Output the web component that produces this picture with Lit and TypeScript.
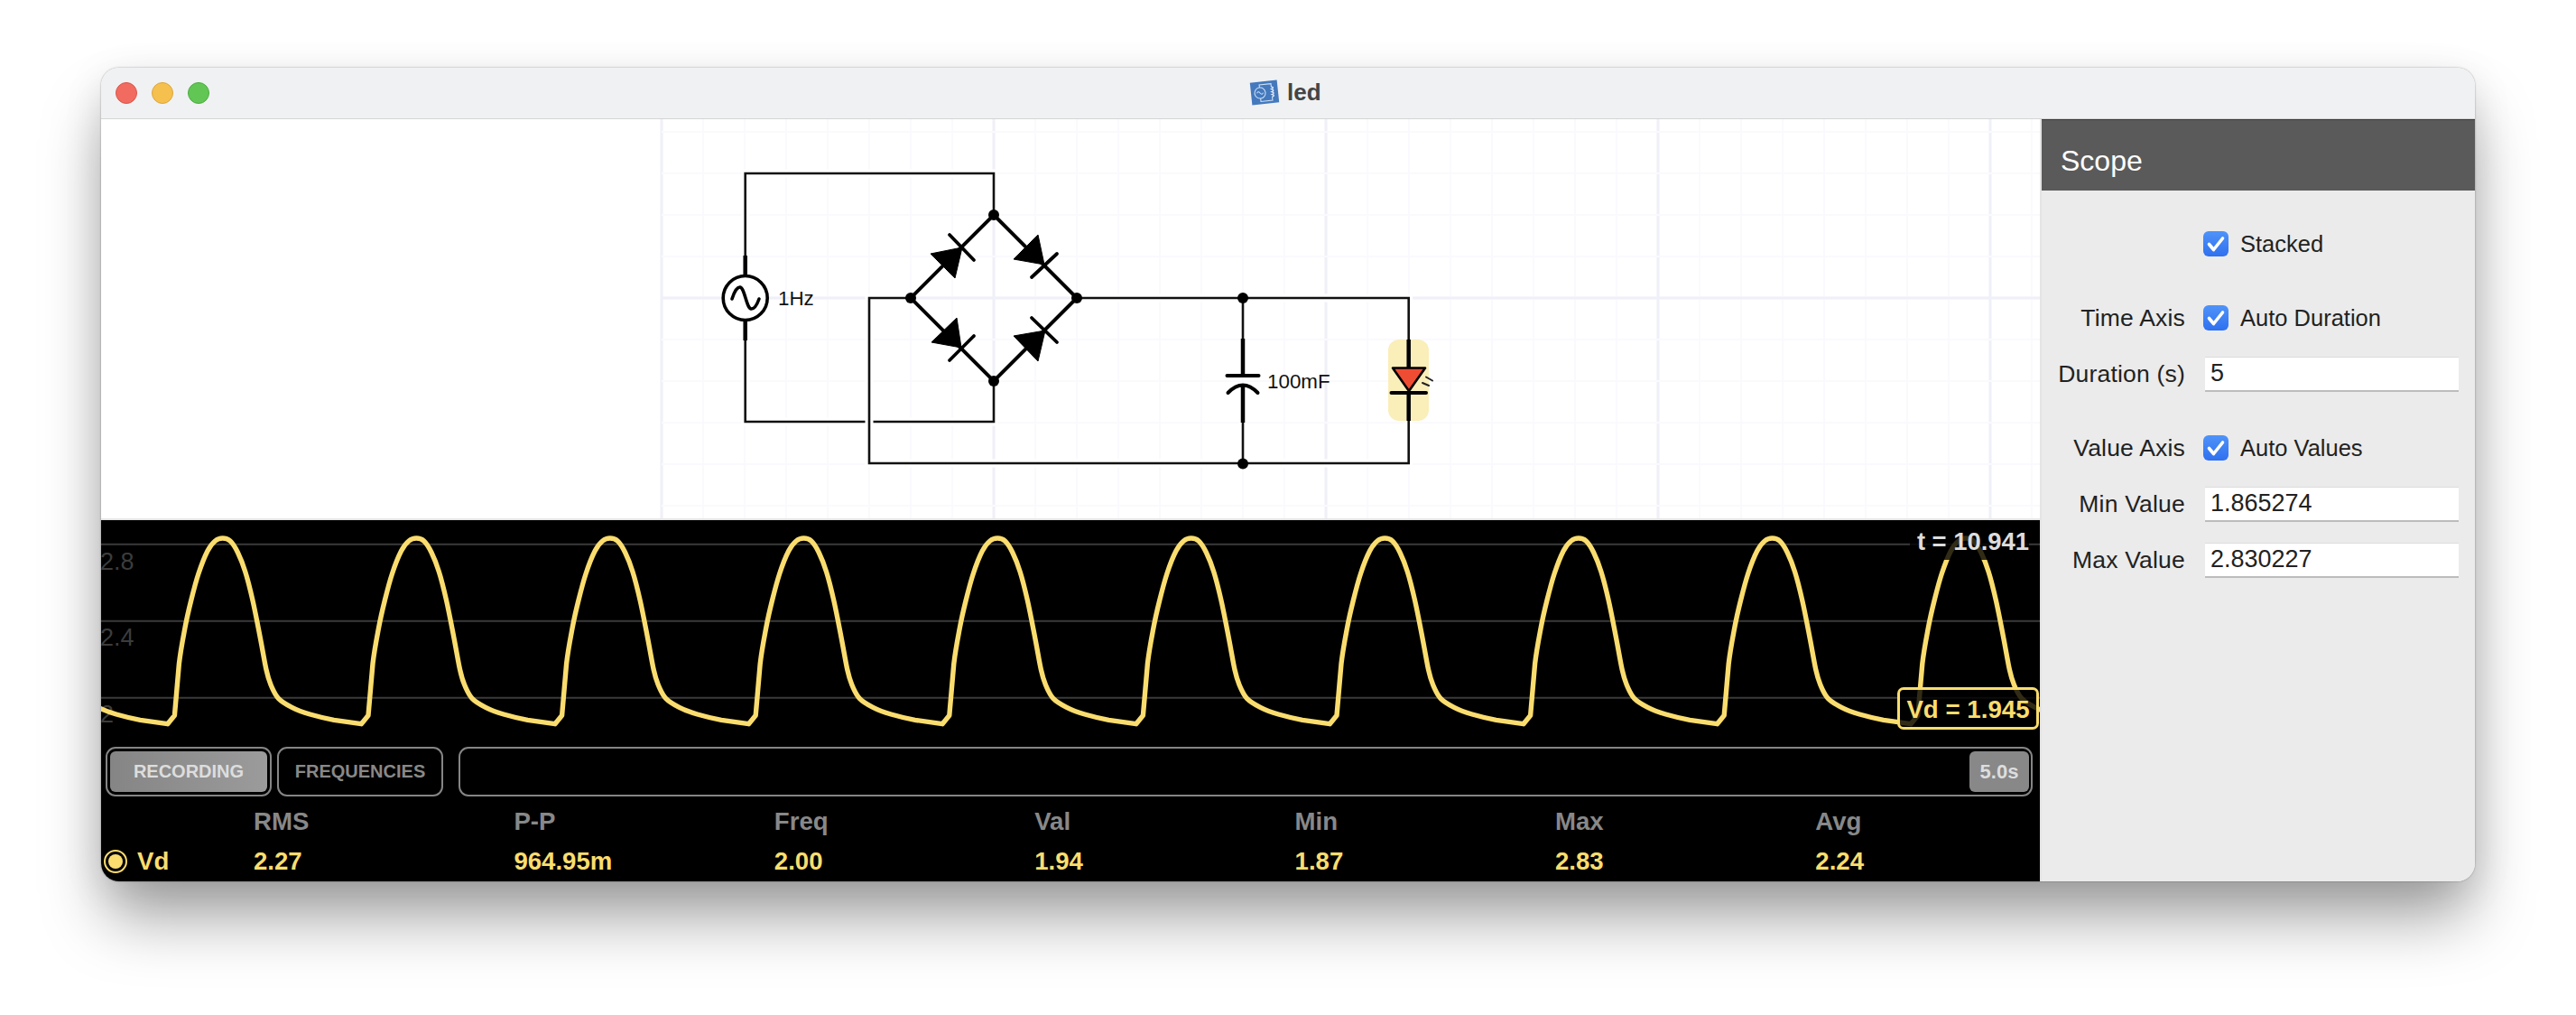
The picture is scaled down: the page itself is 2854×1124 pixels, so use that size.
import { LitElement, html, css, svg, unsafeCSS } from "lit";
import { customElement } from "lit/decorators.js";

const TRACE = "#fadd6e";
const TRACE_CSS = unsafeCSS(TRACE);

// one cycle of the scope trace, as offset from the peak x -> page y
const CYCLE: [number, number][] = [
  [-61, 801.7], [-53.3, 792.3], [-48.3, 735], [-41.7, 695], [-35, 665], [-26.7, 635],
  [-16.7, 610], [-8.3, 599], [0, 596], [8.3, 599], [16.7, 611.7], [25, 633],
  [33.3, 665], [41.7, 706.7], [48.3, 741.7], [53.3, 758.3], [61.7, 773.3],
  [76.7, 783.3], [96.7, 791], [123.3, 797.3],
];
const PERIOD = 214.6;
const FIRST_PEAK = 246.7;

function tracePath(): string {
  const pts: [number, number][] = [];
  for (let i = -1; i < 11; i++) {
    const peak = FIRST_PEAK + i * PERIOD;
    for (const [dx, y] of CYCLE) pts.push([peak + dx, y]);
  }
  let d = `M${pts[0][0]} ${pts[0][1]}`;
  for (let i = 0; i < pts.length - 1; i++) {
    const p0 = pts[Math.max(i - 1, 0)];
    const p1 = pts[i];
    const p2 = pts[i + 1];
    const p3 = pts[Math.min(i + 2, pts.length - 1)];
    // the kink at the start of each rise stays sharp
    const n = i % CYCLE.length;
    const k = n === 0 || n === 1 || n === CYCLE.length - 1 ? 0 : 1 / 6;
    d += `C${(p1[0] + (p2[0] - p0[0]) * k).toFixed(1)} ${(p1[1] + (p2[1] - p0[1]) * k).toFixed(1)} ${(p2[0] - (p3[0] - p1[0]) * k).toFixed(1)} ${(p2[1] - (p3[1] - p1[1]) * k).toFixed(1)} ${p2[0].toFixed(1)} ${p2[1]}`;
  }
  return d;
}

const WIRES = [
  "M825.7 283V192H1101V238",
  "M825.7 377V467H1101V422",
  "M1193 330H1560.7V376",
  "M1377 330V375",
  "M1377 468V513",
  "M1009 330H963V513H1560.7V466",
];

const DIODES: { tri: string; bar: string }[] = [
  { tri: "1066,274 1031,281 1058,308", bar: "M1052 260L1079 288" },
  { tri: "1157,293 1150,260 1123,287", bar: "M1143 307L1171 281" },
  { tri: "1065,385 1060,352 1032,379", bar: "M1052 399L1079 372" },
  { tri: "1158,366 1123,372 1150,400", bar: "M1143 352L1171 379" },
];

const STATS = [
  ["RMS", "2.27"],
  ["P-P", "964.95m"],
  ["Freq", "2.00"],
  ["Val", "1.94"],
  ["Min", "1.87"],
  ["Max", "2.83"],
  ["Avg", "2.24"],
];

@customElement("app-root")
export class AppRoot extends LitElement {
  static styles = css`
    :host {
      display: block;
      width: 2854px;
      height: 1124px;
      background: #fff;
      font-family: "Liberation Sans", Arial, sans-serif;
      overflow: hidden;
    }
    .page {
      padding: 75px 0 0 112px;
    }
    .window {
      width: 2630px;
      height: 901px;
      border-radius: 20px;
      overflow: hidden;
      display: flex;
      flex-direction: column;
    }
    .shadow {
      width: 2630px;
      height: 901px;
      border-radius: 20px;
      box-shadow: 0 46px 70px -6px rgba(0, 0, 0, 0.36), 0 10px 44px rgba(0, 0, 0, 0.1), 0 0 2px rgba(0, 0, 0, 0.4);
    }
    .titlebar {
      height: 56px;
      flex: none;
      background: #f0f1f3;
      border-bottom: 1px solid #d4d4d4;
      display: flex;
      align-items: center;
      position: relative;
    }
    .lights {
      display: flex;
      gap: 16px;
      padding-left: 16px;
    }
    .light {
      width: 24px;
      height: 24px;
      border-radius: 50%;
      box-sizing: border-box;
    }
    .red { background: #f26b60; border: 1px solid #d9544a; }
    .yellow { background: #f6c04f; border: 1px solid #dba53a; }
    .green { background: #62c655; border: 1px solid #4cab40; }
    .title {
      position: absolute;
      left: 1272px;
      top: 12px;
      display: flex;
      align-items: center;
      gap: 8px;
      font-size: 26px;
      font-weight: 700;
      color: #444;
    }
    .title svg {
      display: block;
    }
    .body {
      flex: 1;
      display: flex;
      min-height: 0;
    }
    .left {
      width: 2148px;
      flex: none;
      display: flex;
      flex-direction: column;
    }
    .canvas {
      height: 442px;
      flex: none;
      background: #fff;
      border-bottom: 2px solid #e6e6e6;
    }
    .canvas svg,
    .plot svg {
      display: block;
    }
    .canvas text {
      font-family: "Liberation Sans", Arial, sans-serif;
      font-size: 22.4px;
      fill: #111;
    }
    .scope {
      flex: 1;
      background: #000;
      display: flex;
      flex-direction: column;
    }
    .plot {
      height: 246px;
      flex: none;
      position: relative;
      overflow: hidden;
    }
    .plot text {
      font-family: "Liberation Sans", Arial, sans-serif;
      font-size: 27px;
      fill: #3c3c3c;
    }
    .time-tag {
      position: absolute;
      left: 2004px;
      top: 0;
      width: 132px;
      height: 44px;
      padding-top: 9px;
      box-sizing: border-box;
      background: rgba(0, 0, 0, 0.8);
      color: #ddd;
      font-size: 27.4px;
      font-weight: 700;
      line-height: 30px;
      text-align: right;
      white-space: nowrap;
    }
    .value-tag {
      position: absolute;
      left: 1990px;
      top: 185px;
      width: 157px;
      height: 47px;
      box-sizing: border-box;
      border: 3px solid ${TRACE_CSS};
      border-radius: 7px;
      background: rgba(0, 0, 0, 0.8);
      color: ${TRACE_CSS};
      font-size: 27.7px;
      font-weight: 700;
      line-height: 43px;
      text-align: center;
      white-space: nowrap;
    }
    .controls {
      height: 55px;
      flex: none;
      margin-top: 5px;
      padding: 0 8px 0 5px;
      display: flex;
      gap: 6px;
    }
    .btn {
      width: 184px;
      height: 55px;
      box-sizing: border-box;
      border: 2px solid #858585;
      border-radius: 11px;
      padding: 3px;
      font-size: 20px;
      font-weight: 700;
      color: #888;
    }
    .btn span {
      display: flex;
      align-items: center;
      justify-content: center;
      height: 100%;
      border-radius: 6px;
    }
    .btn.on {
      color: #ddd;
    }
    .btn.on span {
      background: linear-gradient(90deg, #858585, #9b9b9b);
    }
    .slider {
      flex: 1;
      margin-left: 11px;
      box-sizing: border-box;
      border: 2px solid #858585;
      border-radius: 11px;
      padding: 3px 2px 3px 0;
      display: flex;
      justify-content: flex-end;
    }
    .thumb {
      width: 66px;
      border-radius: 6px;
      background: #888;
      color: #ddd;
      font-size: 22px;
      font-weight: 700;
      display: flex;
      align-items: center;
      justify-content: center;
    }
    .stats {
      margin-top: 6px;
      display: grid;
      grid-template-columns: 169px repeat(7, 288.4px);
      grid-auto-rows: 44px;
      align-items: center;
      font-size: 27.6px;
      font-weight: 700;
    }
    .head {
      color: #888;
    }
    .val,
    .name {
      color: ${TRACE_CSS};
    }
    .name {
      display: flex;
      align-items: center;
      gap: 11px;
      padding-left: 3px;
    }
    .radio {
      width: 26px;
      height: 26px;
      box-sizing: border-box;
      border: 2px solid ${TRACE_CSS};
      border-radius: 50%;
      padding: 3px;
    }
    .radio i {
      display: block;
      width: 100%;
      height: 100%;
      border-radius: 50%;
      background: ${TRACE_CSS};
    }
    .panel {
      flex: 1;
      background: #ebebeb;
      border-left: 2px solid #e4e4e4;
    }
    .panel-head {
      height: 79px;
      box-sizing: border-box;
      border-top: 1px solid #3a3a3a;
      background: #5a5a5a;
      color: #fff;
      font-size: 32px;
      padding: 12px 0 0 21px;
      display: flex;
      align-items: center;
    }
    .form {
      padding: 39px 18px 0 0;
      display: flex;
      flex-direction: column;
      gap: 22px;
    }
    .row {
      display: grid;
      grid-template-columns: 159px 1fr;
      column-gap: 20px;
      height: 40px;
      align-items: center;
      font-size: 26.5px;
      letter-spacing: 0.2px;
      color: #222;
    }
    .row.section {
      margin-top: 20px;
    }
    .row label {
      text-align: right;
      white-space: nowrap;
    }
    .check {
      display: flex;
      align-items: center;
      gap: 13px;
      font-size: 25.5px;
      letter-spacing: 0;
    }
    .box {
      width: 28px;
      height: 28px;
      border-radius: 6px;
      background: linear-gradient(#4f93f9, #2f70ef);
      flex: none;
    }
    .box svg {
      display: block;
    }
    input {
      margin-left: 2px;
      height: 39px;
      width: calc(100% - 2px);
      box-sizing: border-box;
      border: 0;
      border-top: 1px solid #dcdcdc;
      border-bottom: 2px solid #bcbcbc;
      background: #fff;
      padding: 0 6px;
      font: 27px "Liberation Sans", Arial, sans-serif;
      color: #222;
      outline: none;
    }
  `;

  private renderGrid() {
    const lines = [];
    for (let x = 733, i = 0; x < 2262; x += 46, i++) {
      const major = i % 8 === 0;
      lines.push(svg`<line x1=${x} x2=${x} y1="132" y2="574" stroke=${major ? "#eff0f8" : "#fafafe"} stroke-width=${major ? 3 : 2} />`);
    }
    for (let y = 146; y < 574; y += 46) {
      const major = y === 330;
      lines.push(svg`<line x1="733" x2="2260" y1=${y} y2=${y} stroke=${major ? "#eff0f8" : "#fafafe"} stroke-width=${major ? 3 : 2} />`);
    }
    return lines;
  }

  private renderCircuit() {
    return html`<svg width="2148" height="442" viewBox="112 132 2148 442">
      ${this.renderGrid()}
      ${WIRES.map(
        (d) => svg`
          <path d=${d} fill="none" stroke="#fff" stroke-width="9" />
          <path d=${d} fill="none" stroke="#111" stroke-width="2.6" />`,
      )}
      <!-- source -->
      <path d="M825.7 283V306M825.7 354V377" stroke="#000" stroke-width="4.5" />
      <circle cx="825.7" cy="330" r="24.5" fill="#fff" stroke="#000" stroke-width="3.6" />
      <path d="M811 331C813.5 323 817 317.5 820 318C825 319 827 341 832 342C835.5 342.5 838.5 338 841 331" fill="none" stroke="#000" stroke-width="3.6" stroke-linecap="round" />
      <text x="862" y="338">1Hz</text>
      <!-- bridge -->
      <path d="M1101 238L1193 330L1101 422L1009 330Z" fill="none" stroke="#000" stroke-width="4" />
      ${DIODES.map(
        (p) => svg`
          <polygon points=${p.tri} fill="#000" stroke="#000" stroke-width="1" />
          <path d=${p.bar} stroke="#000" stroke-width="3.8" stroke-linecap="round" />`,
      )}
      ${[[1101, 238], [1009, 330], [1193, 330], [1101, 422]].map(
        ([x, y]) => svg`<circle cx=${x} cy=${y} r="6" fill="#000" />`,
      )}
      <!-- capacitor -->
      <path d="M1377 375V416M1377 427V468" stroke="#000" stroke-width="4.5" />
      <path d="M1359.5 416H1394.5" stroke="#000" stroke-width="4" stroke-linecap="round" />
      <path d="M1360.5 435Q1377 418 1393.5 435" fill="none" stroke="#000" stroke-width="4" stroke-linecap="round" />
      <circle cx="1377" cy="330" r="6" fill="#000" />
      <circle cx="1377" cy="513.5" r="6" fill="#000" />
      <text x="1404" y="430">100mF</text>
      <!-- led -->
      <rect x="1538" y="376" width="45" height="90" rx="12" fill="#faeeb9" />
      <path d="M1560.7 376V407M1560.7 435V466" stroke="#000" stroke-width="4.5" />
      <polygon points="1543,407.5 1579,407.5 1561,433" fill="#ef4d33" stroke="#000" stroke-width="2.6" stroke-linejoin="round" />
      <path d="M1541.5 435H1580" stroke="#000" stroke-width="4" stroke-linecap="round" />
      <path d="M1580 417.5L1587 421.5M1576 424L1583 427" stroke="#222" stroke-width="2" stroke-linecap="round" />
    </svg>`;
  }

  private renderPlot() {
    return html`<div class="plot">
      <svg width="2148" height="246" viewBox="112 576 2148 246">
        ${[602.7, 687.7, 772.7].map(
          (y) => svg`<line x1="112" x2="2260" y1=${y} y2=${y} stroke="#3a3a3a" stroke-width="2" />`,
        )}
        <text x="111" y="631">2.8</text>
        <text x="111" y="715">2.4</text>
        <text x="111" y="800">2</text>
        <path d=${tracePath()} fill="none" stroke=${TRACE} stroke-width="5.4" stroke-linejoin="round" />
      </svg>
      <div class="time-tag">t = 10.941</div>
      <div class="value-tag">Vd = 1.945</div>
    </div>`;
  }

  private checkbox(label: string) {
    return html`<div class="check">
      <span class="box">
        <svg width="28" height="28" viewBox="0 0 28 28">
          <path d="M6.5 14.5L11.5 20.5L21.5 8" fill="none" stroke="#fff" stroke-width="3.6" stroke-linecap="round" stroke-linejoin="round" />
        </svg>
      </span>
      ${label}
    </div>`;
  }

  render() {
    return html`<div class="page">
      <div class="shadow">
        <div class="window">
          <div class="titlebar">
            <div class="lights">
              <div class="light red"></div>
              <div class="light yellow"></div>
              <div class="light green"></div>
            </div>
            <div class="title">
              <svg width="34" height="31" viewBox="0 0 34 31">
                <g transform="rotate(-6 17 15.5)">
                  <rect x="2" y="3" width="30" height="25" fill="#4479bd" />
                  <circle cx="12" cy="15.5" r="6" fill="none" stroke="#cfe0f5" stroke-width="1.1" />
                  <path d="M8.5 15.5Q10 12.5 12 15.5T15.5 15.5" fill="none" stroke="#cfe0f5" stroke-width="1" />
                  <path d="M12 9.5V6.5H25V10M12 21.5V25H25V21" fill="none" stroke="#cfe0f5" stroke-width="1.1" />
                  <path d="M25 10Q29 11 25 12.5Q29 14 25 15.5Q29 17 25 18.5Q29 20 25 21" fill="none" stroke="#e6effa" stroke-width="1.3" />
                </g>
              </svg>
              <span>led</span>
            </div>
          </div>
          <div class="body">
            <div class="left">
              <div class="canvas">${this.renderCircuit()}</div>
              <div class="scope">
                ${this.renderPlot()}
                <div class="controls">
                  <div class="btn on"><span>RECORDING</span></div>
                  <div class="btn"><span>FREQUENCIES</span></div>
                  <div class="slider"><div class="thumb">5.0s</div></div>
                </div>
                <div class="stats">
                  <div></div>
                  ${STATS.map(([h]) => html`<div class="head">${h}</div>`)}
                  <div class="name"><span class="radio"><i></i></span>Vd</div>
                  ${STATS.map(([, v]) => html`<div class="val">${v}</div>`)}
                </div>
              </div>
            </div>
            <div class="panel">
              <div class="panel-head">Scope</div>
              <div class="form">
                <div class="row"><label></label>${this.checkbox("Stacked")}</div>
                <div class="row section"><label>Time Axis</label>${this.checkbox("Auto Duration")}</div>
                <div class="row"><label>Duration (s)</label><input value="5" /></div>
                <div class="row section"><label>Value Axis</label>${this.checkbox("Auto Values")}</div>
                <div class="row"><label>Min Value</label><input value="1.865274" /></div>
                <div class="row"><label>Max Value</label><input value="2.830227" /></div>
              </div>
            </div>
          </div>
        </div>
      </div>
    </div>`;
  }
}
